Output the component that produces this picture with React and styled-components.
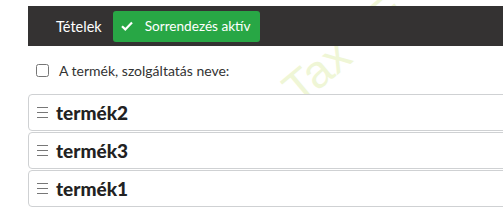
import React from "react";
import styled, { createGlobalStyle } from "styled-components";

const Global = createGlobalStyle`
  html, body { margin: 0; padding: 0; background: #fff; overflow: hidden; }
  body { font-family: "Lato", "Liberation Sans", sans-serif; color: #333; }
`;

const Page = styled.div`
  position: relative;
  width: 503px;
  height: 214px;
  padding: 6px 0 0 28px;
  box-sizing: border-box;
  overflow: hidden;
`;

const Watermark = styled.div`
  position: absolute;
  left: 304px;
  top: 66px;
  transform-origin: left bottom;
  transform: rotate(-40deg);
  font-family: "Liberation Sans", sans-serif;
  font-size: 46px;
  line-height: 46px;
  color: #eff6d6;
  white-space: nowrap;
  z-index: 0;
  pointer-events: none;
`;

const Content = styled.div`
  position: relative;
  z-index: 1;
  width: 560px;
`;

const Toolbar = styled.div`
  display: flex;
  align-items: center;
  gap: 11px;
  height: 40px;
  background: #343232;
  padding-left: 28px;
`;

const Title = styled.span`
  color: #fff;
  font-size: 14.5px;
`;

const ToggleButton = styled.button`
  display: flex;
  align-items: center;
  gap: 12px;
  height: 31px;
  padding: 0 10px 0 8px;
  border: none;
  border-radius: 3px;
  background: #28a745;
  color: #fff;
  font-family: "Lato", "Liberation Sans", sans-serif;
  font-size: 13.6px;
`;

const FilterRow = styled.label`
  display: flex;
  align-items: center;
  gap: 10px;
  padding-left: 8px;
  height: 48px;
  font-size: 14px;
  color: #333;
`;

const Check = styled.input`
  margin: 0;
  width: 13px;
  height: 13px;
`;

const List = styled.div`
  display: flex;
  flex-direction: column;
  gap: 1px;
`;

const Item = styled.div`
  display: flex;
  align-items: center;
  gap: 8px;
  height: 37px;
  box-sizing: border-box;
  border: 1px solid #cfd1d3;
  border-radius: 4px;
  padding-left: 8px;
  background: #fff;
`;

const ItemName = styled.span`
  font-weight: 900;
  font-size: 19px;
  color: #222;
`;

const Handle = () => (
  <svg width="11" height="11" viewBox="0 0 11 11">
    <g stroke="#777" strokeWidth="1">
      <line x1="0" y1="0.5" x2="11" y2="0.5" />
      <line x1="0" y1="5.5" x2="11" y2="5.5" />
      <line x1="0" y1="10.5" x2="11" y2="10.5" />
    </g>
  </svg>
);

const CheckIcon = () => (
  <svg width="12" height="10" viewBox="0 0 12 10">
    <path d="M1 5.2 L4.3 8.4 L11 1.4" fill="none" stroke="#fff" strokeWidth="2.2" />
  </svg>
);

const items = ["termék2", "termék3", "termék1"];

export default function App() {
  return (
    <>
      <Global />
      <Page>
        <Watermark>Tax - E</Watermark>
        <Content>
          <Toolbar>
            <Title>Tételek</Title>
            <ToggleButton>
              <CheckIcon />
              Sorrendezés aktív
            </ToggleButton>
          </Toolbar>
          <FilterRow>
            <Check type="checkbox" />
            A termék, szolgáltatás neve:
          </FilterRow>
          <List>
            {items.map((n) => (
              <Item key={n}>
                <Handle />
                <ItemName>{n}</ItemName>
              </Item>
            ))}
          </List>
        </Content>
      </Page>
    </>
  );
}
